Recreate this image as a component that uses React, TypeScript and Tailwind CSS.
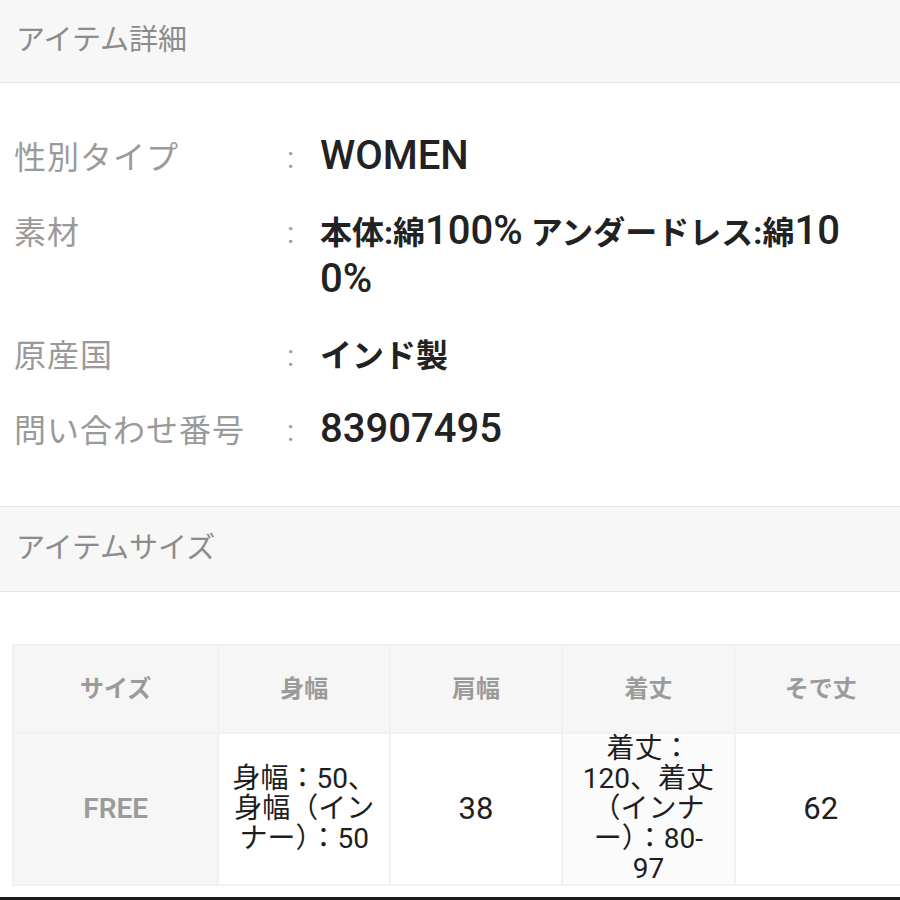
import React from "react";

// latin runs in the reference render larger than the kana/kanji around them
const Latin = ({ children }: { children: React.ReactNode }) => (
  <span className="text-[40px] leading-[0] font-medium">{children}</span>
);

const details = [
  { label: "性別タイプ", value: <Latin>WOMEN</Latin> },
  {
    label: "素材",
    value: (
      <>
        本体:綿<Latin>100%</Latin> アンダードレス:綿<Latin>10</Latin>
        <br />
        <Latin>0%</Latin>
      </>
    ),
  },
  { label: "原産国", value: "インド製" },
  { label: "問い合わせ番号", value: <Latin>83907495</Latin> },
];

const headers = ["サイズ", "身幅", "肩幅", "着丈", "そで丈"];

const SectionHeader = ({ title, className = "" }: { title: string; className?: string }) => (
  <div
    className={`flex items-center bg-[#f7f7f7] pl-4 text-[29px] text-[#8c8c8c] ${className}`}
  >
    {title}
  </div>
);

export default function App() {
  return (
    <div className="w-[900px] h-[900px] overflow-hidden bg-white font-['Roboto','Noto_Sans_CJK_JP',sans-serif]">
      <SectionHeader title="アイテム詳細" className="h-[83px] border-b border-[#e4e4e4]" />

      {/* item details */}
      <div className="flex flex-col gap-[27px] pt-[51px] pb-[51px] pl-[14px] leading-[48px]">
        {details.map((d) => (
          <div key={d.label} className="flex items-start">
            <div className="w-[272px] shrink-0 text-[32px] tracking-[1px] text-[#9a9a9a]">
              {d.label}
            </div>
            <div className="w-[34px] shrink-0 pl-[1px] text-[30px] text-[#a0a0a0]">:</div>
            <div className="text-[32px] font-bold text-[#222]">{d.value}</div>
          </div>
        ))}
      </div>

      <SectionHeader title="アイテムサイズ" className="h-[86px] border-y border-[#e4e4e4]" />

      {/* size table */}
      <div className="mt-[52px] overflow-hidden pl-[12px]">
        <table className="w-[896px] table-fixed border-separate border-spacing-[2px] bg-[#f1f1f1]">
          <colgroup>
            <col className="w-[203px]" />
            <col className="w-[169px]" />
            <col className="w-[170px]" />
            <col className="w-[170px]" />
            <col className="w-[170px]" />
          </colgroup>
          <thead>
            <tr className="h-[86px]">
              {headers.map((h) => (
                <th
                  key={h}
                  className="bg-[#f6f6f6] text-center align-middle text-[24px] font-semibold text-[#9b9b9b]"
                >
                  {h}
                </th>
              ))}
            </tr>
          </thead>
          <tbody>
            <tr className="h-[150px] text-[28px] leading-[30px] text-[#1e1e1e]">
              <td className="bg-[#f6f6f6] text-center align-middle text-[28px] font-semibold text-[#9b9b9b]">
                FREE
              </td>
              <td className="bg-white px-1 text-center align-middle whitespace-nowrap">
                身幅：50、
                <br />
                身幅（イン
                <br />
                ナー）：50
              </td>
              <td className="bg-white text-center align-middle text-[31px]">38</td>
              <td className="bg-[#fbfbfb] px-1 text-center align-middle whitespace-nowrap">
                着丈：
                <br />
                120、着丈
                <br />
                （インナ
                <br />
                ー）：80-
                <br />
                97
              </td>
              <td className="bg-white text-center align-middle text-[31px]">62</td>
            </tr>
          </tbody>
        </table>
      </div>

      <div className="mt-[11px] h-[3px] bg-[#1a1a1a]" />
    </div>
  );
}
